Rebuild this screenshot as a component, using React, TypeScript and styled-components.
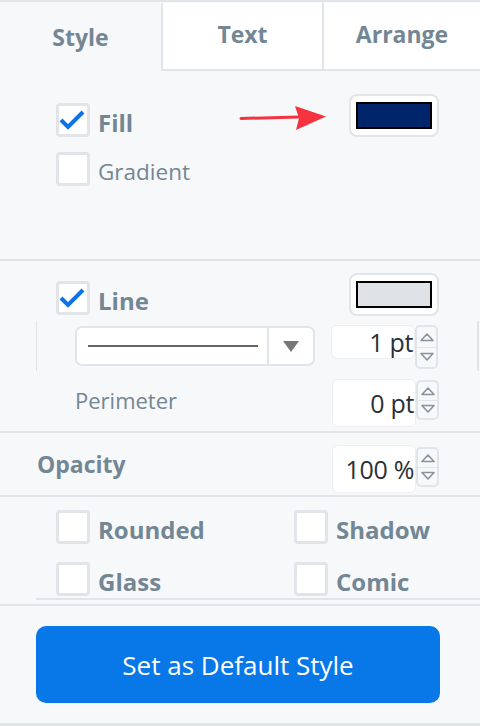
import React from "react";
import styled, { createGlobalStyle } from "styled-components";

const Global = createGlobalStyle`
  html, body { margin: 0; padding: 0; background: #f7f8fa; }
  body { font-family: "Open Sans", "Liberation Sans", sans-serif; }
  * { box-sizing: border-box; }
`;

const LINE = "#e1e4e8";
const LABEL = "#738694";

const Panel = styled.div`
  width: 480px;
  height: 726px;
  background: #f7f8fa;
  border-top: 2px solid ${LINE};
  border-bottom: 3px solid ${LINE};
  display: flex;
  flex-direction: column;
  overflow: hidden;
`;

const Tabs = styled.div`
  display: flex;
  height: 69px;
  padding-top: 1px;
`;

const Tab = styled.div<{ $active?: boolean; $w: number }>`
  width: ${(p) => p.$w}px;
  display: flex;
  align-items: center;
  justify-content: center;
  font-size: 23px;
  font-weight: 700;
  color: ${LABEL};
  background: ${(p) => (p.$active ? "transparent" : "#fff")};
  border-left: ${(p) => (p.$active ? "none" : `2px solid ${LINE}`)};
  border-bottom: ${(p) => (p.$active ? "none" : `2px solid ${LINE}`)};
  padding-bottom: ${(p) => (p.$active ? "0" : "5px")};
`;

const Section = styled.div<{ $pt: number; $h: number }>`
  padding-top: ${(p) => p.$pt}px;
  height: ${(p) => p.$h}px;
`;

const Divider = styled.div<{ $indent?: number }>`
  height: 2px;
  background: ${LINE};
  margin-left: ${(p) => p.$indent || 0}px;
`;

const TopRow = styled.div`
  display: flex;
  align-items: flex-start;
  padding-left: 56px;
  padding-right: 41px;
`;

const CheckItem = styled.label<{ $mt?: number }>`
  display: flex;
  align-items: center;
  gap: 8px;
  height: 34px;
  margin-top: ${(p) => p.$mt || 0}px;
`;

const Box = styled.span`
  width: 34px;
  height: 34px;
  border: 3px solid ${LINE};
  border-radius: 4px;
  background: #fff;
  display: flex;
  align-items: center;
  justify-content: center;
  flex-shrink: 0;
`;

const Label = styled.span<{ $bold?: boolean }>`
  font-size: ${(p) => (p.$bold ? 24 : 22.5)}px;
  font-weight: ${(p) => (p.$bold ? 700 : 400)};
  color: ${LABEL};
  padding-top: 5px;
  white-space: nowrap;
`;

const Swatch = styled.div`
  margin-left: auto;
  width: 90px;
  height: 43px;
  border: 2px solid ${LINE};
  border-radius: 8px;
  background: #fff;
  padding: 6px 5px;
  display: flex;
`;

const SwatchFill = styled.div<{ $color: string }>`
  flex: 1;
  border: 2px solid #000;
  background: ${(p) => p.$color};
`;

const ArrowWrap = styled.div`
  margin-left: auto;
  margin-top: 10px;
  margin-right: 20px;
  display: flex;
`;

const Check = ({ on }: { on?: boolean }) => (
  <Box>
    {on && (
      <svg width="28" height="24" viewBox="0 0 28 24" style={{ marginLeft: -2 }}>
        <path d="M3 12 L10 19 L25 4" fill="none" stroke="#0b72e7" strokeWidth="4" />
      </svg>
    )}
  </Box>
);

const StyleRow = styled.div`
  margin-left: 36px;
  width: 443px;
  height: 50px;
  border-left: 1px solid ${LINE};
  border-right: 2px solid ${LINE};
  display: flex;
  align-items: flex-start;
  padding-left: 38px;
  padding-top: 4px;
`;

const Select = styled.div`
  width: 240px;
  height: 40px;
  margin-top: 1px;
  border: 2px solid ${LINE};
  border-radius: 7px;
  background: #fff;
  display: flex;
`;

const SelectValue = styled.div`
  width: 192px;
  display: flex;
  align-items: center;
  padding: 0 9px 0 11px;
  border-right: 2px solid ${LINE};
`;

const Stroke = styled.div`
  height: 2px;
  flex: 1;
  background: #666;
`;

const SelectArrow = styled.div`
  flex: 1;
  display: flex;
  align-items: center;
  justify-content: center;
`;

const NumInput = styled.div<{ $h: number; $mt?: number; $ml?: number }>`
  width: 84px;
  height: ${(p) => p.$h}px;
  margin-top: ${(p) => p.$mt || 0}px;
  margin-left: ${(p) => p.$ml || 0}px;
  background: #fff;
  border: 1px solid #eceef1;
  border-radius: 6px;
  display: flex;
  align-items: center;
  justify-content: flex-end;
  padding-right: 1px;
  font-size: 25px;
  color: #2b3036;
  white-space: nowrap;
  letter-spacing: -0.3px;
`;

const Spinner = styled.div<{ $h: number; $mt?: number }>`
  width: 23px;
  height: ${(p) => p.$h}px;
  margin-top: ${(p) => p.$mt || 0}px;
  border: 2px solid ${LINE};
  border-radius: 5px;
  display: flex;
  flex-direction: column;
`;

const SpinHalf = styled.div<{ $top?: boolean }>`
  flex: 1;
  display: flex;
  align-items: center;
  justify-content: center;
  border-bottom: ${(p) => (p.$top ? `1px solid ${LINE}` : "none")};
`;

const Spin = ({ h, mt }: { h: number; mt?: number }) => (
  <Spinner $h={h} $mt={mt}>
    <SpinHalf $top>
      <svg width="16" height="10" viewBox="0 0 16 10">
        <path d="M2 8.5 L8 2 L14 8.5 Z" fill="none" stroke="#8b9299" strokeWidth="1.6" strokeLinejoin="round" />
      </svg>
    </SpinHalf>
    <SpinHalf>
      <svg width="16" height="10" viewBox="0 0 16 10">
        <path d="M2 1.5 L8 8 L14 1.5 Z" fill="none" stroke="#8b9299" strokeWidth="1.6" strokeLinejoin="round" />
      </svg>
    </SpinHalf>
  </Spinner>
);

const FieldRow = styled.div<{ $pl: number; $h: number }>`
  height: ${(p) => p.$h}px;
  display: flex;
  align-items: flex-start;
  padding-left: ${(p) => p.$pl}px;
  padding-right: 41px;
`;

const FieldLabel = styled.span<{ $bold?: boolean; $mt: number }>`
  font-size: ${(p) => (p.$bold ? 23 : 22)}px;
  font-weight: ${(p) => (p.$bold ? 700 : 400)};
  color: ${LABEL};
  margin-top: ${(p) => p.$mt}px;
  margin-right: auto;
`;

const Options = styled.div`
  display: grid;
  grid-template-columns: 238px 1fr;
  row-gap: 16px;
  padding: 13px 0 0 56px;
  height: 101px;
`;

const ButtonArea = styled.div`
  padding: 20px 0 0 36px;
`;

const Button = styled.button`
  width: 404px;
  height: 77px;
  border: none;
  border-radius: 10px;
  background: #0877e8;
  color: #fff;
  font-family: "Open Sans", "Liberation Sans", sans-serif;
  font-size: 26px;
  font-weight: 500;
  cursor: pointer;
`;

export default function App() {
  return (
    <>
      <Global />
      <Panel>
        <Tabs>
          <Tab $active $w={161}>Style</Tab>
          <Tab $w={161}>Text</Tab>
          <Tab $w={158}>Arrange</Tab>
        </Tabs>

        <Section $pt={23} $h={188}>
          <TopRow>
            <CheckItem $mt={9}>
              <Check on />
              <Label $bold>Fill</Label>
            </CheckItem>
            <ArrowWrap>
              <svg width="90" height="28" viewBox="0 0 90 28">
                <path d="M2 14.5 L60 13" stroke="#f5333f" strokeWidth="3" strokeLinecap="round" fill="none" />
                <path d="M56 2 L87 12.5 L57 26 L60 14 Z" fill="#f5333f" />
              </svg>
            </ArrowWrap>
            <Swatch style={{ marginLeft: 0 }}>
              <SwatchFill $color="#00256b" />
            </Swatch>
          </TopRow>
          <TopRow>
            <CheckItem $mt={15}>
              <Check />
              <Label>Gradient</Label>
            </CheckItem>
          </TopRow>
        </Section>
        <Divider />

        <Section $pt={12} $h={60}>
          <TopRow>
            <CheckItem $mt={8}>
              <Check on />
              <Label $bold>Line</Label>
            </CheckItem>
            <Swatch>
              <SwatchFill $color="#dfe2e7" />
            </Swatch>
          </TopRow>
        </Section>
        <StyleRow>
          <Select>
            <SelectValue>
              <Stroke />
            </SelectValue>
            <SelectArrow>
              <svg width="18" height="13" viewBox="0 0 18 13">
                <path d="M1 1 L17 1 L9 12 Z" fill="#777" />
              </svg>
            </SelectArrow>
          </Select>
          <NumInput $h={34} $ml={16}>1 pt</NumInput>
          <Spin h={44} />
        </StyleRow>
        <FieldRow $pl={75} $h={60}>
          <FieldLabel $mt={14}>Perimeter</FieldLabel>
          <NumInput $h={48} $mt={8}>0 pt</NumInput>
          <Spin h={40} mt={9} />
        </FieldRow>
        <Divider />
        <FieldRow $pl={37} $h={62}>
          <FieldLabel $bold $mt={15}>Opacity</FieldLabel>
          <NumInput $h={48} $mt={12}>100 %</NumInput>
          <Spin h={40} mt={14} />
        </FieldRow>
        <Divider />
        <Options>
          <CheckItem>
            <Check />
            <Label $bold>Rounded</Label>
          </CheckItem>
          <CheckItem>
            <Check />
            <Label $bold>Shadow</Label>
          </CheckItem>
          <CheckItem>
            <Check />
            <Label $bold>Glass</Label>
          </CheckItem>
          <CheckItem>
            <Check />
            <Label $bold>Comic</Label>
          </CheckItem>
        </Options>
        <Divider $indent={36} />
        <div style={{ height: 4 }} />
        <Divider />
        <ButtonArea>
          <Button>Set as Default Style</Button>
        </ButtonArea>
      </Panel>
    </>
  );
}
